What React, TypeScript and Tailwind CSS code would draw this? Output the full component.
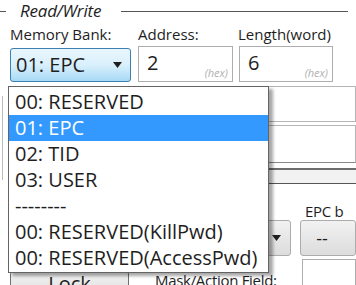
import React from "react";

const items = [
  "00: RESERVED",
  "01: EPC",
  "02: TID",
  "03: USER",
  "--------",
  "00: RESERVED(KillPwd)",
  "00: RESERVED(AccessPwd)",
];

const Arrow = () => (
  <svg width="9" height="6" viewBox="0 0 9 6">
    <path d="M0 0H9L4.5 6Z" fill="#1e1e1e" />
  </svg>
);

const HexBox = ({ value, width }: { value: string; width: string }) => (
  <div
    className={`flex items-start justify-between h-[36px] border border-[#adadad] bg-white pl-[8px] pr-[4px] ${width}`}
  >
    <span className="mt-[4px] text-[20px] leading-[24px] text-[#1e1e1e]">{value}</span>
    <span className="self-end mb-[2px] text-[11px] italic leading-[12px] text-[#b0b0b0]">
      (hex)
    </span>
  </div>
);

export default function App() {
  return (
    <div
      className="relative w-[356px] h-[285px] overflow-hidden bg-white text-[#1e1e1e] flex flex-col"
      style={{ fontFamily: '"Open Sans", "Noto Sans", sans-serif' }}
    >
      {/* Read/Write group header */}
      <div className="flex items-center h-[26px] pr-[8px]">
        <div className="w-[6px] h-px bg-[#555]" />
        <span className="ml-[14px] text-[17px] italic leading-[22px] tracking-[-0.2px]">
          Read/Write
        </span>
        <div className="flex-1 ml-[20px] h-px bg-[#555]" />
      </div>

      <div className="flex pl-[10px] mt-[2px] text-[15px] leading-[20px]">
        <span className="w-[128px]">Memory Bank:</span>
        <span className="w-[100px]">Address:</span>
        <span>Length(word)</span>
      </div>

      <div className="flex items-start pl-[10px] mt-[2px]">
        <div className="flex items-center justify-between mt-[2px] w-[121px] h-[34px] rounded-[3px] border border-[#3c7fb1] bg-gradient-to-b from-[#eaf6fd] via-[#d9f0fc] to-[#a7d9f5] pl-[5px] pr-[8px]">
          <span className="text-[20px] leading-[26px]">01: EPC</span>
          <Arrow />
        </div>
        <div className="ml-[7px]">
          <HexBox value="2" width="w-[95px]" />
        </div>
        <div className="ml-[6px]">
          <HexBox value="6" width="w-[94px]" />
        </div>
      </div>

      {/* controls behind the list */}
      <div className="flex">
        <div className="ml-[2px] mt-[14px] w-px h-[84px] bg-[#bbb]" />
        <div className="ml-auto flex flex-col w-[106px]">
          <div className="mt-[4px] h-[36px] border border-[#b5b5b5] bg-white" />
          <div className="mt-[3px] h-[38px] border border-[#b5b5b5] border-b-[#8a8a8a] bg-white" />
          <div className="mt-[5px] h-[2px] bg-[#6d6d6d]" />
          <div className="h-[13px] bg-[#f2f2f2]" />
          <div className="h-px bg-[#555]" />
        </div>
      </div>
      <div className="w-[8px] h-px bg-[#555] -mt-[4px]" />

      <div className="flex justify-end mt-[21px] text-[15px] leading-[20px] tracking-[-0.3px]">
        <span className="w-[51px]">EPC b</span>
      </div>
      <div className="flex items-start -mt-[1px] pl-[220px]">
        <div className="flex items-center justify-end w-[77px] h-[36px] rounded-[3px] border border-[#acacac] bg-gradient-to-b from-[#f2f2f2] to-[#dcdcdc] pr-[9px]">
          <Arrow />
        </div>
        <div className="ml-[9px] flex justify-center w-[60px] h-[36px] rounded-[3px] border border-[#acacac] bg-gradient-to-b from-[#f2f2f2] to-[#dcdcdc] pr-[12px]">
          <span className="mt-[5px] text-[18px] leading-[24px]">--</span>
        </div>
      </div>
      <div className="flex items-start mt-[3px] pl-[10px]">
        <div className="mt-[12px] flex justify-center w-[119px] h-[30px] rounded-[3px] border border-[#707070] bg-gradient-to-b from-[#f2f2f2] to-[#dcdcdc]">
          <span className="-mt-[1px] text-[20px] leading-[26px]">Lock</span>
        </div>
        <span className="ml-[26px] mt-[11px] text-[15px] leading-[20px] tracking-[-0.3px]">
          Mask/Action Field:
        </span>
        <div className="ml-auto w-[54px] h-[30px] border border-[#adadad] bg-white" />
      </div>

      {/* dropdown list (open menu) */}
      <div className="absolute left-[8px] top-[86px] w-[261px] h-[187px] border border-[#646464] bg-white shadow-[4px_3px_3px_rgba(0,0,0,0.35)]">
        <div className="flex flex-col pt-[2px]">
          {items.map((t, i) => (
            <div
              key={t}
              className={`h-[26px] pl-[6px] text-[20px] leading-[26px] whitespace-nowrap ${
                i === 1 ? "bg-[#3399ff] text-white" : ""
              }`}
            >
              {t}
            </div>
          ))}
        </div>
      </div>
    </div>
  );
}
